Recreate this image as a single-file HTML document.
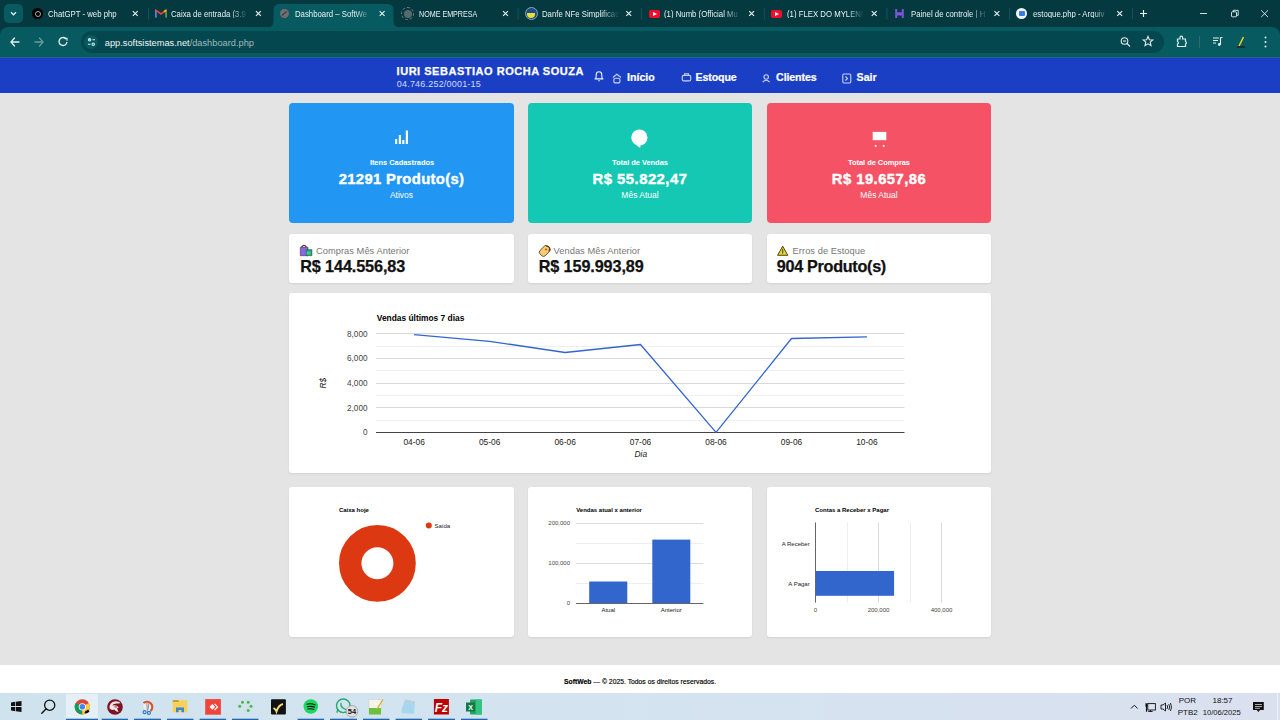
<!DOCTYPE html>
<html><head><meta charset="utf-8">
<style>
*{margin:0;padding:0;box-sizing:border-box}
html,body{width:1280px;height:720px;overflow:hidden;background:#e4e4e4;font-family:"Liberation Sans",sans-serif}
.a{position:absolute}
.t{position:absolute;white-space:nowrap;line-height:1}
#tabs{left:0;top:0;width:1280px;height:40px;background:#043940}
#toolbar{left:0;top:27px;width:1280px;height:30px;background:#065a60;border-radius:8px 8px 0 0}
#omni{left:80.6px;top:31.2px;width:1083px;height:22px;border-radius:11px;background:#05474e}
#nav{left:0;top:57px;width:1280px;height:36px;background:#1a3fc4;border-top:1px solid #22648c}
.card{position:absolute;border-radius:4px}
.wc{position:absolute;background:#fff;border-radius:3px;box-shadow:0 1px 2px rgba(0,0,0,.08)}
#footer{left:0;top:665px;width:1280px;height:28px;background:#fff}
#taskbar{left:0;top:693px;width:1280px;height:27px;background:linear-gradient(90deg,#cfe3ef,#d3e4f0 45%,#dbe0ef)}
</style></head><body>
<!-- TAB STRIP -->
<div id="tabs" class="a"></div>
<div class="a" style="left:4px;top:4px;width:19px;height:19px;border-radius:5px;background:#065a60"></div>
<svg class="a" style="left:9px;top:9px" width="9" height="9" viewBox="0 0 9 9"><path d="M2 3.3 L4.5 5.8 L7 3.3" stroke="#e6f0f0" stroke-width="1.3" fill="none"/></svg>
<!-- active tab -->
<svg class="a" style="left:266px;top:4px" width="136" height="24" viewBox="0 0 136 24"><path d="M0 24 Q7.5 24 7.5 16.5 L7.5 6 Q7.5 0 13.5 0 L121.5 0 Q127.5 0 127.5 6 L127.5 16.5 Q127.5 24 135 24 Z" fill="#065a60"/></svg>
<!-- tab 1 -->
<div class="a" style="left:32px;top:8px;width:11px;height:11px;border-radius:50%;background:#000"></div>
<div class="a" style="left:34.5px;top:10.5px;width:6px;height:6px;border-radius:50%;border:1.3px solid #aaa"></div>
<div class="t" style="left:48px;top:9.9px;font-size:8.6px;color:#e9f1f1;transform:scaleX(0.906);transform-origin:0 0">ChatGPT - web php</div>
<!-- tab 2 -->
<svg class="a" style="left:155px;top:9px" width="12" height="9" viewBox="0 0 12 9"><path d="M0.8 8.5 V1.2 L6 5 L11.2 1.2 V8.5" stroke="#ea4335" stroke-width="1.6" fill="none"/><path d="M0.8 8.5 V2" stroke="#4285f4" stroke-width="1.6"/><path d="M11.2 8.5 V2" stroke="#34a853" stroke-width="1.6"/><path d="M9 2.8 L11.2 1.2" stroke="#fbbc04" stroke-width="1.6"/></svg>
<div class="t" style="left:171px;top:9.9px;font-size:8.6px;color:#e9f1f1;transform:scaleX(0.906);transform-origin:0 0;width:85px;overflow:hidden;-webkit-mask-image:linear-gradient(90deg,#000 66px,transparent 85px)">Caixa de entrada (3.9</div>
<!-- tab 3 active -->
<div class="a" style="left:279.5px;top:9px;width:9px;height:9px;border-radius:50%;background:#7a6a70"></div>
<svg class="a" style="left:279.5px;top:9px" width="9" height="9" viewBox="0 0 9 9"><path d="M2 6.5 Q4.5 4 7 2.5" stroke="#0e5457" stroke-width="1.2" fill="none"/></svg>
<div class="t" style="left:295px;top:9.9px;font-size:8.6px;color:#e9f1f1;transform:scaleX(0.906);transform-origin:0 0;width:85px;overflow:hidden;-webkit-mask-image:linear-gradient(90deg,#000 66px,transparent 85px)">Dashboard – SoftWe</div>
<!-- tab 4 -->
<div class="a" style="left:401px;top:7px;width:13px;height:13px;border-radius:50%;border:1px dashed #6f7d7f"></div>
<div class="a" style="left:403.5px;top:9.5px;width:8px;height:8px;border-radius:50%;background:#59696b"></div>
<div class="t" style="left:418.5px;top:9.9px;font-size:8.6px;color:#e9f1f1;transform:scaleX(0.83);transform-origin:0 0">NOME EMPRESA</div>
<!-- tab 5 -->
<div class="a" style="left:524.5px;top:7px;width:13px;height:13px;border-radius:50%;background:#1f4a8a;border:1px solid #8aa"></div>
<div class="a" style="left:527px;top:13px;width:8px;height:5px;border-radius:0 0 4px 4px;background:#e8e030"></div>
<div class="t" style="left:541.5px;top:9.9px;font-size:8.6px;color:#e9f1f1;transform:scaleX(0.906);transform-origin:0 0;width:85px;overflow:hidden;-webkit-mask-image:linear-gradient(90deg,#000 66px,transparent 85px)">Danfe NFe Simplificad</div>
<!-- tab 6 -->
<div class="a" style="left:649px;top:9.5px;width:11px;height:8px;border-radius:2px;background:#f00f2a"></div>
<svg class="a" style="left:652.5px;top:11.5px" width="4" height="4" viewBox="0 0 4 4"><path d="M0 0 L4 2 L0 4Z" fill="#fff"/></svg>
<div class="t" style="left:664px;top:9.9px;font-size:8.6px;color:#e9f1f1;transform:scaleX(0.906);transform-origin:0 0;width:85px;overflow:hidden;-webkit-mask-image:linear-gradient(90deg,#000 66px,transparent 85px)">(1) Numb (Official Mu</div>
<!-- tab 7 -->
<div class="a" style="left:771.3px;top:9.5px;width:11px;height:8px;border-radius:2px;background:#f00f2a"></div>
<svg class="a" style="left:774.8px;top:11.5px" width="4" height="4" viewBox="0 0 4 4"><path d="M0 0 L4 2 L0 4Z" fill="#fff"/></svg>
<div class="t" style="left:787px;top:9.9px;font-size:8.6px;color:#e9f1f1;transform:scaleX(0.906);transform-origin:0 0;width:85px;overflow:hidden;-webkit-mask-image:linear-gradient(90deg,#000 66px,transparent 85px)">(1) FLEX DO MYLENN</div>
<!-- tab 8 -->
<svg class="a" style="left:895px;top:8.7px" width="9" height="9.2" viewBox="0 0 9 9.2"><path d="M1.2 0 V9.2 M7.8 0 V9.2 M1.2 4.2 H7.8 M1.2 5.6 H7.8" stroke="#7b55d8" stroke-width="2" fill="none"/></svg>
<div class="t" style="left:910.6px;top:9.9px;font-size:8.6px;color:#e9f1f1;transform:scaleX(0.906);transform-origin:0 0;width:85px;overflow:hidden;-webkit-mask-image:linear-gradient(90deg,#000 66px,transparent 85px)">Painel de controle | H</div>
<!-- tab 9 -->
<div class="a" style="left:1016.4px;top:8px;width:11px;height:11px;border-radius:50%;background:#f2f6ff;"></div>
<div class="a" style="left:1018.9px;top:10.5px;width:6px;height:5px;border-radius:1px;background:#3a7be0"></div>
<div class="t" style="left:1032.5px;top:9.9px;font-size:8.6px;color:#e9f1f1;transform:scaleX(0.906);transform-origin:0 0;width:85px;overflow:hidden;-webkit-mask-image:linear-gradient(90deg,#000 66px,transparent 85px)">estoque.php - Arquiv</div>
<!-- close x's -->
<svg class="a" style="left:0;top:0" width="1280" height="27" viewBox="0 0 1280 27">
<g stroke="#e9f1f1" stroke-width="1.15">
<path d="M132.80 11.1 L137.70 15.9 M137.70 11.1 L132.80 15.9"/>
<path d="M255.95 11.1 L260.85 15.9 M260.85 11.1 L255.95 15.9"/>
<path d="M379.65 11.1 L384.55 15.9 M384.55 11.1 L379.65 15.9"/>
<path d="M503.05 11.1 L507.95 15.9 M507.95 11.1 L503.05 15.9"/>
<path d="M626.30 11.1 L631.20 15.9 M631.20 11.1 L626.30 15.9"/>
<path d="M749.15 11.1 L754.05 15.9 M754.05 11.1 L749.15 15.9"/>
<path d="M871.75 11.1 L876.65 15.9 M876.65 11.1 L871.75 15.9"/>
<path d="M994.45 11.1 L999.35 15.9 M999.35 11.1 L994.45 15.9"/>
<path d="M1117.25 11.1 L1122.15 15.9 M1122.15 11.1 L1117.25 15.9"/>
<path d="M1140 13.5 H1147 M1143.5 10 V17"/>
<path d="M1200 13.5 H1207" stroke-width="0.9"/>
<path d="M1261.2 10.3 L1268 17.1 M1268 10.3 L1261.2 17.1" stroke-width="0.9"/>
</g>
<g stroke="#e9f1f1" stroke-width="0.9" fill="none"><rect x="1231.5" y="11.8" width="5" height="5" rx="0.8"/><path d="M1233.2 11.8 V10.3 H1238.2 V15.3 H1236.5"/></g>
<g stroke="#15545a" stroke-width="1"><path d="M148.5 8 V19.5"/><path d="M518.1 8 V19.5"/><path d="M641.3 8 V19.5"/><path d="M764.3 8 V19.5"/><path d="M886.9 8 V19.5"/><path d="M1009.6 8 V19.5"/><path d="M1132.4 8 V19.5"/></g>
</svg>

<!-- TOOLBAR -->
<div id="toolbar" class="a"></div>
<div id="omni" class="a"></div>
<div class="a" style="left:84.4px;top:35px;width:14px;height:14px;border-radius:50%;background:#065a60"></div>
<svg class="a" style="left:0;top:27px" width="1280" height="30" viewBox="0 0 1280 30">
<g stroke="#e6f0f0" stroke-width="1.3" fill="none" stroke-linecap="round">
<path d="M11 15 H19 M14.5 11 L11 15 L14.5 19"/>
</g>
<g stroke="#6a9a9b" stroke-width="1.3" fill="none" stroke-linecap="round">
<path d="M35 15 H43 M39.5 11 L43 15 L39.5 19"/>
</g>
<g stroke="#e6f0f0" stroke-width="1.3" fill="none">
<path d="M66.3 12.2 A4 4 0 1 0 67 15"/><path d="M64.5 11.2 H67 V13.7" stroke-width="1.1"/>
</g>
<g stroke="#d8e6e6" stroke-width="1.1" fill="none">
<path d="M88.5 12.8 H90 M92.5 12.8 H95"/><circle cx="89.6" cy="12.8" r="1.2"/>
<path d="M88 17.2 H90.5 M94.5 17.2 H95"/><circle cx="93.2" cy="17.2" r="1.2"/>
</g>
<g stroke="#dfeaea" stroke-width="1.1" fill="none">
<circle cx="1124.5" cy="14" r="3.3"/><path d="M1127 16.5 L1130 19.5"/><path d="M1123 14 H1126"/>
<path d="M1148 9.5 L1149.4 12.8 L1152.8 13 L1150.2 15.2 L1151 18.6 L1148 16.8 L1145 18.6 L1145.8 15.2 L1143.2 13 L1146.6 12.8 Z"/>
<path d="M1177.5 12 H1180 V10.5 A1.3 1.3 0 0 1 1182.6 10.5 V12 H1185.5 V14.5 A1.3 1.3 0 0 1 1185.5 17 V19.5 H1177.5 V17 A1.3 1.3 0 0 0 1177.5 14.5 Z" stroke-width="1.2"/>
</g>
<path d="M1199.5 9 V21" stroke="#2e6c6e"/>
<g stroke="#e6f0f0" stroke-width="1.1"><path d="M1213 11 H1219 M1213 13.5 H1218 M1213 16 H1216"/><path d="M1220.5 10.5 V17.5 M1220.5 10.5 H1222.5"/></g>
<circle cx="1219.3" cy="17.5" r="1.4" fill="#e6f0f0"/>
<path d="M1239 19 L1243.5 10" stroke="#f2d21a" stroke-width="1.5"/><path d="M1237 20 H1245" stroke="#222" stroke-width="1.5"/>
<g fill="#e6f0f0"><circle cx="1265.5" cy="10.5" r="1"/><circle cx="1265.5" cy="15" r="1"/><circle cx="1265.5" cy="19.5" r="1"/></g>
</svg>
<div class="t" style="left:104.8px;top:38.6px;font-size:9.25px;color:#eef5f5">app.softsistemas.net<span style="color:#9bbcbd">/dashboard.php</span></div>

<!-- NAV -->
<div id="nav" class="a"></div>
<div class="t" style="left:396.6px;top:66.2px;font-size:11px;font-weight:700;color:#fff;letter-spacing:0.52px;-webkit-text-stroke:0.25px #fff">IURI SEBASTIAO ROCHA SOUZA</div>
<div class="t" style="left:396.8px;top:80.2px;font-size:9px;color:#d2dcfa;letter-spacing:0.2px">04.746.252/0001-15</div>
<svg class="a" style="left:0;top:57px" width="1280" height="36" viewBox="0 0 1280 36">
<g stroke="#f2f5ff" stroke-width="1.1" fill="none">
<path d="M594.6 21.9 H603.4 M595.9 21.7 L596.3 17.5 A2.7 2.7 0 0 1 601.7 17.5 L602.1 21.7 M598.2 23.8 H599.8"/>
</g>
<g stroke="#c9d4fa" stroke-width="1.1" fill="none">
<path d="M612.8 20.5 L616.9 17.3 L621 20.5"/><rect x="613.8" y="21.3" width="6.2" height="4.6" rx="2"/>
<rect x="682.3" y="18.4" width="8.4" height="5.5" rx="1.4"/><path d="M684.6 18.4 V16.8 H688.4 V18.4"/>
<circle cx="766.2" cy="20" r="2.2"/><path d="M762.8 25 Q766.2 21.5 769.6 25"/>
<rect x="842.8" y="17" width="8" height="9" rx="1.2"/><path d="M845.5 19.5 L847.5 21.5 L845.5 23.5"/>
</g>
<g fill="#fff" font-family="Liberation Sans" font-weight="700" font-size="10.6">
</g>
</svg>
<div class="t" style="left:626.9px;top:71.8px;font-size:10.6px;font-weight:700;color:#fff;-webkit-text-stroke:0.2px #fff;letter-spacing:0.05px">Início</div>
<div class="t" style="left:695.5px;top:71.8px;font-size:10.6px;font-weight:700;color:#fff;-webkit-text-stroke:0.2px #fff;letter-spacing:-0.1px">Estoque</div>
<div class="t" style="left:776.1px;top:71.8px;font-size:10.6px;font-weight:700;color:#fff;-webkit-text-stroke:0.2px #fff;letter-spacing:-0.1px">Clientes</div>
<div class="t" style="left:856.6px;top:71.8px;font-size:10.6px;font-weight:700;color:#fff;-webkit-text-stroke:0.2px #fff">Sair</div>

<!-- CARDS ROW 1 -->
<div class="card" style="left:289px;top:103px;width:224.5px;height:120px;background:#2196f3"></div>
<div class="card" style="left:528px;top:103px;width:224px;height:120px;background:#15c8b3"></div>
<div class="card" style="left:767px;top:103px;width:224px;height:120px;background:#f55265"></div>
<svg class="a" style="left:0;top:100px" width="1280" height="60" viewBox="0 0 1280 60">
<g fill="#fff">
<rect x="395" y="39" width="2.2" height="5"/><rect x="398.8" y="35" width="2.2" height="9"/><rect x="402.2" y="40" width="2.2" height="4"/><rect x="405.8" y="30.5" width="2.2" height="13.5"/>
<circle cx="639.4" cy="37.6" r="8.1"/><path d="M633.5 42.5 L639.2 47.6 H640.3 V43.5 Z"/>
<rect x="872.7" y="31.9" width="13.6" height="8.3"/>
<rect x="874.8" y="45" width="1.8" height="1.8"/><rect x="882.8" y="45" width="1.8" height="1.8"/>
</g>
</svg>
<div class="t" style="left:369.9px;top:158.9px;font-size:7.5px;font-weight:700;color:#fff;width:64px;text-align:center;letter-spacing:-0.05px">Itens Cadastrados</div>
<div class="t" style="left:289.5px;top:171.7px;width:224px;text-align:center;font-size:14.8px;font-weight:700;color:#fff;letter-spacing:0.35px;-webkit-text-stroke:0.4px #fff">21291 Produto(s)</div>
<div class="t" style="left:289.5px;top:190.8px;width:224px;text-align:center;font-size:8.5px;color:#fff">Ativos</div>

<div class="t" style="left:528px;top:158.9px;font-size:7.5px;font-weight:700;color:#fff;width:224px;text-align:center;letter-spacing:-0.05px">Total de Vendas</div>
<div class="t" style="left:528px;top:171.7px;width:224px;text-align:center;font-size:14.8px;font-weight:700;color:#fff;letter-spacing:0.5px;-webkit-text-stroke:0.4px #fff">R$ 55.822,47</div>
<div class="t" style="left:528px;top:190.8px;width:224px;text-align:center;font-size:8.5px;color:#fff">Mês Atual</div>

<div class="t" style="left:767px;top:158.9px;font-size:7.5px;font-weight:700;color:#fff;width:224px;text-align:center;letter-spacing:-0.05px">Total de Compras</div>
<div class="t" style="left:767px;top:171.7px;width:224px;text-align:center;font-size:14.8px;font-weight:700;color:#fff;letter-spacing:0.45px;-webkit-text-stroke:0.4px #fff">R$ 19.657,86</div>
<div class="t" style="left:767px;top:190.8px;width:224px;text-align:center;font-size:8.5px;color:#fff">Mês Atual</div>

<!-- CARDS ROW 2 -->
<div class="wc" style="left:289px;top:234px;width:224.5px;height:49px"></div>
<div class="wc" style="left:528px;top:234px;width:224px;height:49px"></div>
<div class="wc" style="left:767px;top:234px;width:224px;height:49px"></div>
<svg class="a" style="left:0;top:240px" width="1280" height="20" viewBox="0 0 1280 20">
<!-- shopping bags -->
<path d="M300.3 7.3 H308 V15.7 H300.3 Z" fill="#8866dd" stroke="#3a2a6a" stroke-width="0.6"/>
<path d="M301.6 7.4 Q302 5.3 304 5.3 Q306 5.3 306.4 7.4" stroke="#4a3a20" stroke-width="1.3" fill="none"/>
<path d="M306.2 9.6 H312 V15.7 H306.2 Z" fill="#2f9a78" stroke="#1a5a40" stroke-width="0.5"/>
<ellipse cx="308.6" cy="13" rx="2.2" ry="1.8" fill="#3ad08a"/>
<!-- tag -->
<rect x="-3.7" y="-5.5" width="7.4" height="11" rx="2.3" transform="translate(544.8 10.9) rotate(45)" fill="#f6cb72" stroke="#4a3010" stroke-width="0.75"/>
<path d="M546.3 6.6 Q548.5 5.8 549.5 7.8 Q549.8 10 548.7 11.3" stroke="#6a3a10" stroke-width="1.1" fill="none"/><circle cx="546" cy="9.4" r="0.85" fill="#8a4a10"/>
<!-- warning -->
<path d="M782.7 6.2 L787.8 15.3 H777.6 Z" fill="#f0d810" stroke="#222" stroke-width="0.85" stroke-linejoin="round"/>
<path d="M782.7 9 V13.6" stroke="#3a3000" stroke-width="0.9"/>
</svg>
<div class="t" style="left:315.9px;top:247.2px;font-size:9.3px;color:#777;letter-spacing:0.05px">Compras Mês Anterior</div>
<div class="t" style="left:300.2px;top:257.9px;font-size:16.2px;font-weight:700;color:#111;letter-spacing:-0.1px;-webkit-text-stroke:0.25px #111">R$ 144.556,83</div>
<div class="t" style="left:553.5px;top:247.2px;font-size:9.3px;color:#777;letter-spacing:0.05px">Vendas Mês Anterior</div>
<div class="t" style="left:538.7px;top:257.9px;font-size:16.2px;font-weight:700;color:#111;letter-spacing:-0.1px;-webkit-text-stroke:0.25px #111">R$ 159.993,89</div>
<div class="t" style="left:792.6px;top:247.2px;font-size:9.3px;color:#777;letter-spacing:0.05px">Erros de Estoque</div>
<div class="t" style="left:776.8px;top:257.9px;font-size:16.2px;font-weight:700;color:#111;letter-spacing:-0.3px;-webkit-text-stroke:0.25px #111">904 Produto(s)</div>

<!-- LINE CHART -->
<div class="wc" style="left:289px;top:293px;width:702px;height:180px"></div>
<svg class="a" style="left:0;top:0" width="1280" height="720" viewBox="0 0 1280 720">
<g stroke="#efefef" stroke-width="1"><path d="M376 346.5 H904.5 M376 370.5 H904.5 M376 395.5 H904.5 M376 420.5 H904.5"/></g>
<g stroke="#d9d9d9" stroke-width="1"><path d="M376 333.5 H904.5 M376 358.5 H904.5 M376 383.5 H904.5 M376 407.5 H904.5"/></g>
<path d="M376 432.5 H904.5" stroke="#444" stroke-width="1.1"/>
<path d="M414.1 334.6 L489.6 341.3 L565.1 352.5 L640.5 344.5 L716 432.4 L791.5 338.5 L866.9 336.8" stroke="#3366cc" stroke-width="1.3" fill="none" stroke-linejoin="round"/>
<g font-family="Liberation Sans" font-size="8.2" fill="#444" text-anchor="end">
<text x="367.5" y="336.6">8,000</text><text x="367.5" y="361.3">6,000</text><text x="367.5" y="386">4,000</text><text x="367.5" y="410.7">2,000</text><text x="367.5" y="435.4">0</text>
</g>
<g font-family="Liberation Sans" font-size="8.4" fill="#222" text-anchor="middle">
<text x="414.1" y="444.8">04-06</text><text x="489.6" y="444.8">05-06</text><text x="565.1" y="444.8">06-06</text><text x="640.5" y="444.8">07-06</text><text x="716" y="444.8">08-06</text><text x="791.5" y="444.8">09-06</text><text x="866.9" y="444.8">10-06</text>
</g>
<text x="640.8" y="457.3" font-family="Liberation Sans" font-size="8.4" font-style="italic" fill="#222" text-anchor="middle">Dia</text>
<text transform="translate(326.3 383.2) rotate(-90)" font-family="Liberation Sans" font-size="8.4" font-style="italic" fill="#222" text-anchor="middle">R$</text>
<text x="376.8" y="320.8" font-family="Liberation Sans" font-size="8.4" font-weight="700" fill="#000">Vendas últimos 7 dias</text>
</svg>

<!-- BOTTOM CARDS -->
<div class="wc" style="left:289px;top:487px;width:224.5px;height:150px"></div>
<div class="wc" style="left:528px;top:487px;width:224px;height:150px"></div>
<div class="wc" style="left:767px;top:487px;width:224px;height:150px"></div>
<svg class="a" style="left:0;top:0" width="1280" height="720" viewBox="0 0 1280 720">
<!-- donut -->
<circle cx="377.4" cy="563.3" r="27.2" stroke="#dc3912" stroke-width="22.4" fill="none"/>
<circle cx="428.8" cy="525.4" r="3" fill="#dc3912"/>
<g font-family="Liberation Sans" font-size="6" fill="#222">
<text x="434.5" y="527.5">Saída</text>
</g>
<g font-family="Liberation Sans" font-size="6" font-weight="700" fill="#000">
<text x="338.9" y="511.9">Caixa hoje</text>
<text x="576.2" y="511.9">Vendas atual x anterior</text>
<text x="815" y="511.9">Contas a Receber x Pagar</text>
</g>
<!-- column chart -->
<g stroke="#eeeeee"><path d="M576 543.5 H703.4 M576 583.5 H703.4"/></g>
<g stroke="#d9d9d9"><path d="M576 523.5 H703.4 M576 563.5 H703.4"/></g>
<rect x="589.2" y="581.5" width="38.1" height="21.5" fill="#3366cc"/>
<rect x="652.3" y="539.6" width="38" height="63.4" fill="#3366cc"/>
<path d="M576 603.5 H703.4" stroke="#666"/>
<g font-family="Liberation Sans" font-size="6" fill="#444" text-anchor="end">
<text x="570" y="525">200,000</text><text x="570" y="565.2">100,000</text><text x="570" y="605.4">0</text>
</g>
<g font-family="Liberation Sans" font-size="6" fill="#222" text-anchor="middle">
<text x="608.3" y="612.2">Atual</text><text x="671.3" y="612.2">Anterior</text>
</g>
<!-- bar chart -->
<g stroke="#eeeeee"><path d="M847.5 522.4 V602.6 M910.5 522.4 V602.6"/></g>
<g stroke="#d9d9d9"><path d="M878.5 522.4 V602.6 M941.5 522.4 V602.6"/></g>
<rect x="815.5" y="571" width="78.6" height="24.8" fill="#3366cc"/>
<path d="M815.5 522.4 V602.6" stroke="#666"/>
<g font-family="Liberation Sans" font-size="6" fill="#222" text-anchor="end">
<text x="809.7" y="545.6">A Receber</text><text x="809.7" y="585.7">A Pagar</text>
</g>
<g font-family="Liberation Sans" font-size="6" fill="#444" text-anchor="middle">
<text x="815.5" y="612.2">0</text><text x="878.5" y="612.2">200,000</text><text x="941.5" y="612.2">400,000</text>
</g>
</svg>

<!-- FOOTER -->
<div id="footer" class="a"></div>
<div class="t" style="left:0;top:678.6px;width:1280px;text-align:center;font-size:6.8px;color:#000;-webkit-text-stroke:0.15px #000"><b style="color:#000">SoftWeb</b> — © 2025. Todos os direitos reservados.</div>
<!-- TASKBAR -->
<div id="taskbar" class="a"></div>
<div class="a" style="left:66px;top:693.5px;width:32px;height:26.5px;background:rgba(255,255,255,.45)"></div>
<svg class="a" style="left:0;top:693px" width="1280" height="27" viewBox="0 0 1280 27">
<!-- underlines -->
<g fill="#2265b0">
<rect x="66" y="25.7" width="32" height="1.3"/><rect x="101.6" y="25.7" width="26.5" height="1.3"/><rect x="134" y="25.7" width="27" height="1.3"/>
<rect x="167" y="25.7" width="26.5" height="1.3"/><rect x="199.6" y="25.7" width="26.5" height="1.3"/><rect x="232" y="25.7" width="26.5" height="1.3"/>
<rect x="297.6" y="25.7" width="26.5" height="1.3"/><rect x="330" y="25.7" width="27" height="1.3"/><rect x="363" y="25.7" width="26.5" height="1.3"/>
<rect x="395.6" y="25.7" width="26.5" height="1.3"/><rect x="428" y="25.7" width="27" height="1.3"/><rect x="461" y="25.7" width="26.5" height="1.3"/>
</g>
<!-- windows -->
<g fill="#111"><path d="M11 9.4 L15.2 8.8 V13.1 H11 Z"/><path d="M15.9 8.7 L21.5 8 V13.1 H15.9 Z"/><path d="M11 13.9 H15.2 V18.2 L11 17.6 Z"/><path d="M15.9 13.9 H21.5 V19 L15.9 18.3 Z"/></g>
<!-- search -->
<circle cx="49.7" cy="12.2" r="5.1" stroke="#111" stroke-width="1.3" fill="none"/><path d="M46.2 15.7 L41.8 20.3" stroke="#111" stroke-width="1.4" stroke-linecap="round"/>
<!-- chrome -->
<circle cx="82.3" cy="13.8" r="7.6" fill="#db4437"/>
<path d="M82.3 13.8 L75.7 10 A7.6 7.6 0 0 0 82.3 21.4 Z" fill="#0f9d58"/>
<path d="M82.3 13.8 L82.3 21.4 A7.6 7.6 0 0 0 88.9 10 Z" fill="#ffcd40"/>
<circle cx="82.3" cy="13.8" r="3.6" fill="#fff"/><circle cx="82.3" cy="13.8" r="2.8" fill="#4285f4"/><path d="M84.5 19.5 Q86 16.5 88 16.2 L89.5 18.5 Q88 20.5 85 20.5 Z" fill="#111"/><path d="M86 17.5 L88.3 15.8" stroke="#e8d040" stroke-width="0.9"/>
<!-- red spartan -->
<circle cx="115" cy="14" r="7.8" fill="#7d1222"/><path d="M109.6 15.5 Q109 9 115.5 8.3 Q119.5 8.3 120.5 10.3 L117.5 10.6 Q113.2 10.4 112.2 12.5 Q116.8 11.8 118.8 14.5 L117 15.2 L118.6 19 Q115.8 18.6 114.2 16.5 Q111.8 17.8 109.6 15.5 Z" fill="#f6e6e6"/><path d="M114.3 14 H117" stroke="#6a3a40" stroke-width="0.9"/>
<!-- snip -->
<circle cx="148.3" cy="13" r="5" fill="#eeeeee"/><path d="M143.5 10 A5.3 5.3 0 1 1 150.5 18" stroke="#d9502a" stroke-width="2.1" fill="none"/><path d="M146.8 9.5 L147.3 17.5 M149 10 L147.8 17.5" stroke="#8a8a8a" stroke-width="0.9"/><circle cx="144.6" cy="19.2" r="1.5" stroke="#2a7ad0" stroke-width="1.2" fill="none"/><circle cx="148.9" cy="19.9" r="1.5" stroke="#2a7ad0" stroke-width="1.2" fill="none"/>
<!-- folder -->
<rect x="172.7" y="7.2" width="14.7" height="12" fill="#f8d15c"/><rect x="172.7" y="7" width="6" height="2" fill="#c9a030"/><path d="M176 19.3 V14.5 H184 V19.3 H181.5 V17 H178.5 V19.3 Z" fill="#3a86d0"/>
<!-- anydesk -->
<rect x="205.2" y="6.1" width="15.7" height="15.6" fill="#ef443b"/><path d="M209.5 13.9 L212.3 11.1 L215.1 13.9 L212.3 16.7 Z" fill="#fff"/><path d="M214.5 10.8 L217.6 13.9 L214.5 17" stroke="#fff" stroke-width="1.1" fill="none"/>
<!-- green dots -->
<g fill="#4cb84c"><circle cx="242.5" cy="9.3" r="1.5"/><circle cx="248.2" cy="9.3" r="1.5"/><circle cx="239.7" cy="13.2" r="1.5"/><circle cx="251" cy="13.2" r="1.5"/><circle cx="248.2" cy="17.4" r="1.5"/></g>
<!-- black -->
<rect x="271" y="6.2" width="14.9" height="15.4" rx="1" fill="#111"/><path d="M273.5 15 Q276 16.5 276.5 18.5 Q278.5 12 283 11" stroke="#f2e070" stroke-width="1.8" fill="none"/>
<!-- spotify -->
<circle cx="310.8" cy="13.5" r="7.3" fill="#1ed760"/><path d="M306.5 11.3 Q311 10 315.5 12 M307 13.8 Q311 12.8 315 14.3 M307.5 16 Q311 15.3 314.3 16.6" stroke="#111" stroke-width="1.1" fill="none"/>
<!-- whatsapp -->
<circle cx="343.3" cy="12.8" r="6.8" stroke="#27a86a" stroke-width="1.4" fill="none"/><path d="M336.9 19.8 L338 16" stroke="#27a86a" stroke-width="1.4"/>
<path d="M341 10.5 Q340.5 14.5 345.5 16.3" stroke="#27a86a" stroke-width="1.3" fill="none" stroke-linecap="round"/><circle cx="352" cy="18.3" r="5.8" fill="#e0e0e0" stroke="#888" stroke-width="0.6"/>
<text x="352" y="21" font-family="Liberation Sans" font-size="7.5" font-weight="700" fill="#111" text-anchor="middle">54</text>
<!-- notepad++ -->
<rect x="369" y="6.5" width="12" height="15" fill="#f4f4e8" stroke="#ccc" stroke-width="0.5"/><rect x="369" y="15" width="12" height="6.5" fill="#6cc040"/><path d="M377 16 L383 6.5" stroke="#e0b020" stroke-width="1.4"/>
<!-- notepad -->
<path d="M401.5 17 L405 6.5 L415 8.5 L414 21 L402 20 Z" fill="#a8d6ee"/><path d="M405 6.5 L415 8.5 V10 L405 8 Z" fill="#cccccc"/>
<!-- filezilla -->
<rect x="433.9" y="6" width="15" height="15.5" fill="#bf0000"/><text x="441.4" y="19" font-family="Liberation Sans" font-size="12" font-weight="700" font-style="italic" fill="#fff" text-anchor="middle">Fz</text>
<!-- excel -->
<rect x="470" y="6.5" width="12" height="15" rx="1" fill="#21a366"/><rect x="476" y="6.5" width="6" height="15" fill="#33c481"/><rect x="466" y="9.5" width="9" height="9" fill="#107c41"/><text x="470.5" y="16.8" font-family="Liberation Sans" font-size="7" font-weight="700" fill="#fff" text-anchor="middle">X</text>
<!-- tray -->
<path d="M1131 15.5 L1134.3 12.2 L1137.6 15.5" stroke="#111" stroke-width="1" fill="none"/>
<g stroke="#111" stroke-width="0.9" fill="none"><rect x="1147.8" y="10.6" width="7.6" height="6.4"/><path d="M1148.2 18.5 H1152.6 M1150.4 17 V18.5"/></g><path d="M1146.5 11 V18.8" stroke="#111" stroke-width="1.1"/><rect x="1145.2" y="10.4" width="2.6" height="1.2" fill="#111"/><rect x="1145.2" y="12.4" width="2.6" height="1.1" fill="#111"/>
<g stroke="#111" stroke-width="0.9" fill="none"><path d="M1161 12 H1163 L1165.5 10 V18 L1163 16 H1161 Z"/><path d="M1167 12 Q1168.3 14 1167 16 M1168.8 11 Q1170.5 14 1168.8 17 M1170.5 10 Q1172.5 14 1170.5 18"/></g>
<path d="M1253 9 H1263.8 V17 H1260 L1258.4 19 L1256.8 17 H1253 Z" fill="#111"/><path d="M1255 11.5 H1262 M1255 13.5 H1262 M1255 15.3 H1260" stroke="#eee" stroke-width="0.7"/>
<path d="M1277.5 0 V27" stroke="#eef2f6" stroke-width="1"/>
</svg>
<div class="t" style="left:1178.7px;top:697.4px;font-size:8px;color:#111">POR</div>
<div class="t" style="left:1177.7px;top:708.7px;font-size:8px;color:#111">PTB2</div>
<div class="t" style="left:1212.5px;top:697.4px;font-size:8px;color:#111">18:57</div>
<div class="t" style="left:1202.7px;top:708.7px;font-size:7.6px;color:#111">10/06/2025</div>

</body></html>
